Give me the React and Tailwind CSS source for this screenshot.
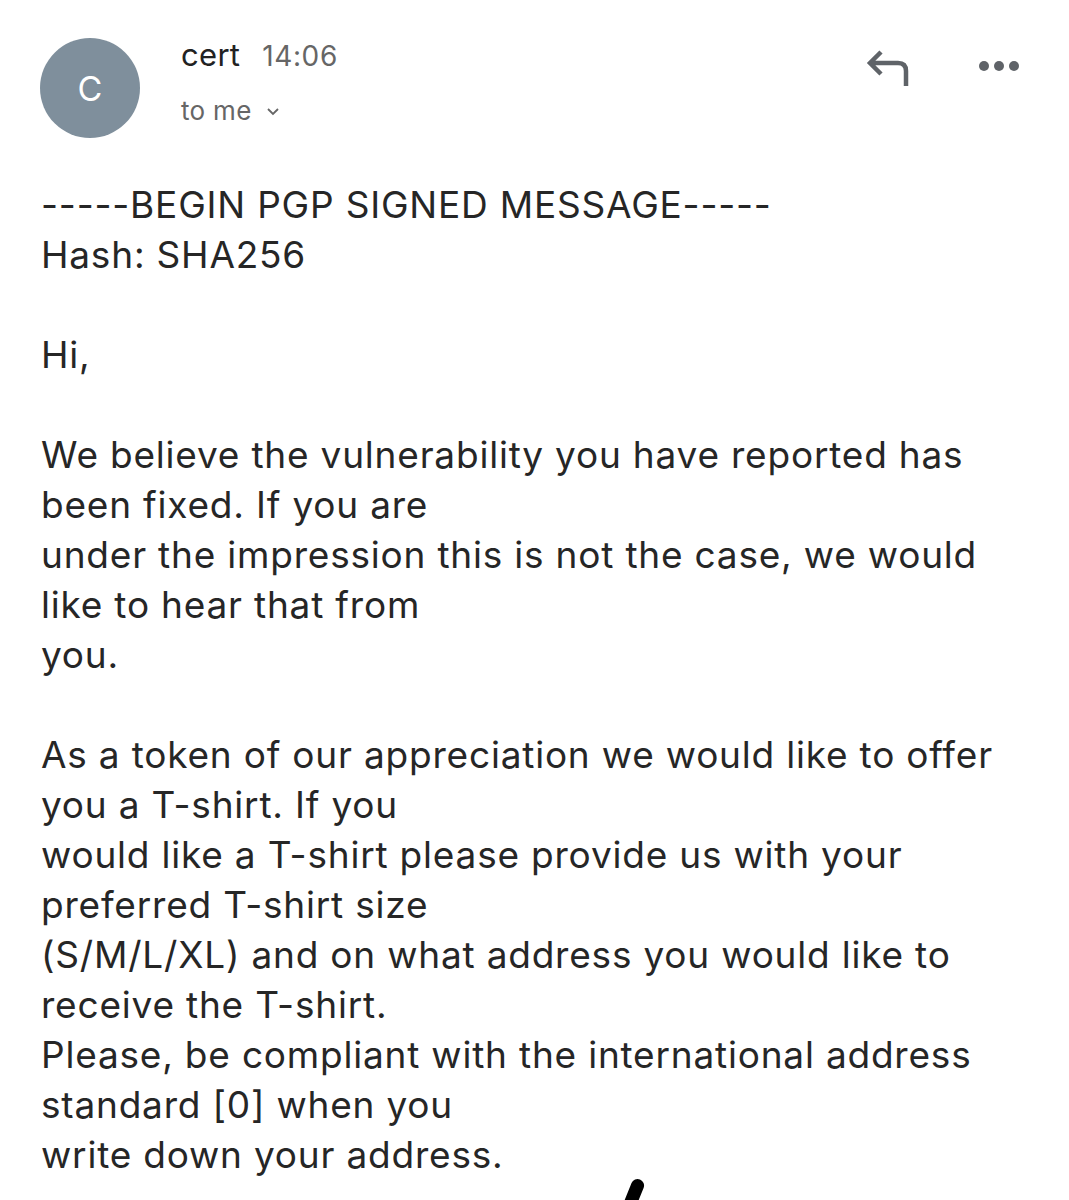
import React from 'react';

const lines = [
  '-----BEGIN PGP SIGNED MESSAGE-----',
  'Hash: SHA256',
  '',
  'Hi,',
  '',
  'We believe the vulnerability you have reported has',
  'been fixed. If you are',
  'under the impression this is not the case, we would',
  'like to hear that from',
  'you.',
  '',
  'As a token of our appreciation we would like to offer',
  'you a T-shirt. If you',
  'would like a T-shirt please provide us with your',
  'preferred T-shirt size',
  '(S/M/L/XL) and on what address you would like to',
  'receive the T-shirt.',
  'Please, be compliant with the international address',
  'standard [0] when you',
  'write down your address.',
];

export default function App() {
  return (
    <div
      className="relative w-[1069px] h-[1200px] overflow-hidden bg-white"
      style={{ fontFamily: 'Inter, "Liberation Sans", Arial, sans-serif' }}
    >
      {/* header */}
      <div className="flex items-start pl-[40px] pr-[50px] pt-[38px]">
        <div className="w-[100px] h-[100px] rounded-full bg-[#7f8f9c] flex items-center justify-center text-white text-[34px]">
          C
        </div>
        <div className="ml-[41px] flex flex-col -mt-[6px]">
          <div className="flex items-baseline gap-[22px]">
            <span className="text-[31px] text-[#222] tracking-[0.3px]">cert</span>
            <span className="text-[28px] text-[#666] tracking-[0.6px]">14:06</span>
          </div>
          <div className="flex items-center mt-[12px] text-[26px] text-[#666] tracking-[0.3px]">
            <span>to me</span>
            <svg width="14" height="10" viewBox="0 0 14 10" className="ml-[14px] mt-[4px]">
              <path d="M2 2 L7 7 L12 2" fill="none" stroke="#666" strokeWidth="1.8" />
            </svg>
          </div>
        </div>
        <div className="ml-auto flex items-center gap-[68px] mt-[10px]">
          <svg width="46" height="40" viewBox="0 0 46 40">
            <path
              d="M16 4 L5 15 L16 26 M5 15 L33 15 Q41 15 41 23 L41 38"
              fill="none"
              stroke="#5f6368"
              strokeWidth="4.5"
            />
          </svg>
          <div className="flex gap-[5px] -mt-[4px]">
            <span className="w-[10px] h-[10px] rounded-full bg-[#5f6368]" />
            <span className="w-[10px] h-[10px] rounded-full bg-[#5f6368]" />
            <span className="w-[10px] h-[10px] rounded-full bg-[#5f6368]" />
          </div>
        </div>
      </div>

      {/* body */}
      <div className="pl-[41px] pt-[42px] text-[37px] leading-[50px] tracking-[0.8px] text-[#262626]">
        {lines.map((l, i) => (
          <div key={i} className="h-[50px] whitespace-pre">
            {l}
          </div>
        ))}
      </div>

      {/* pen mark at the bottom */}
      <div className="absolute left-[626px] top-[1178px] w-[13px] h-[40px] rounded-full bg-black rotate-[22deg]" />
    </div>
  );
}
